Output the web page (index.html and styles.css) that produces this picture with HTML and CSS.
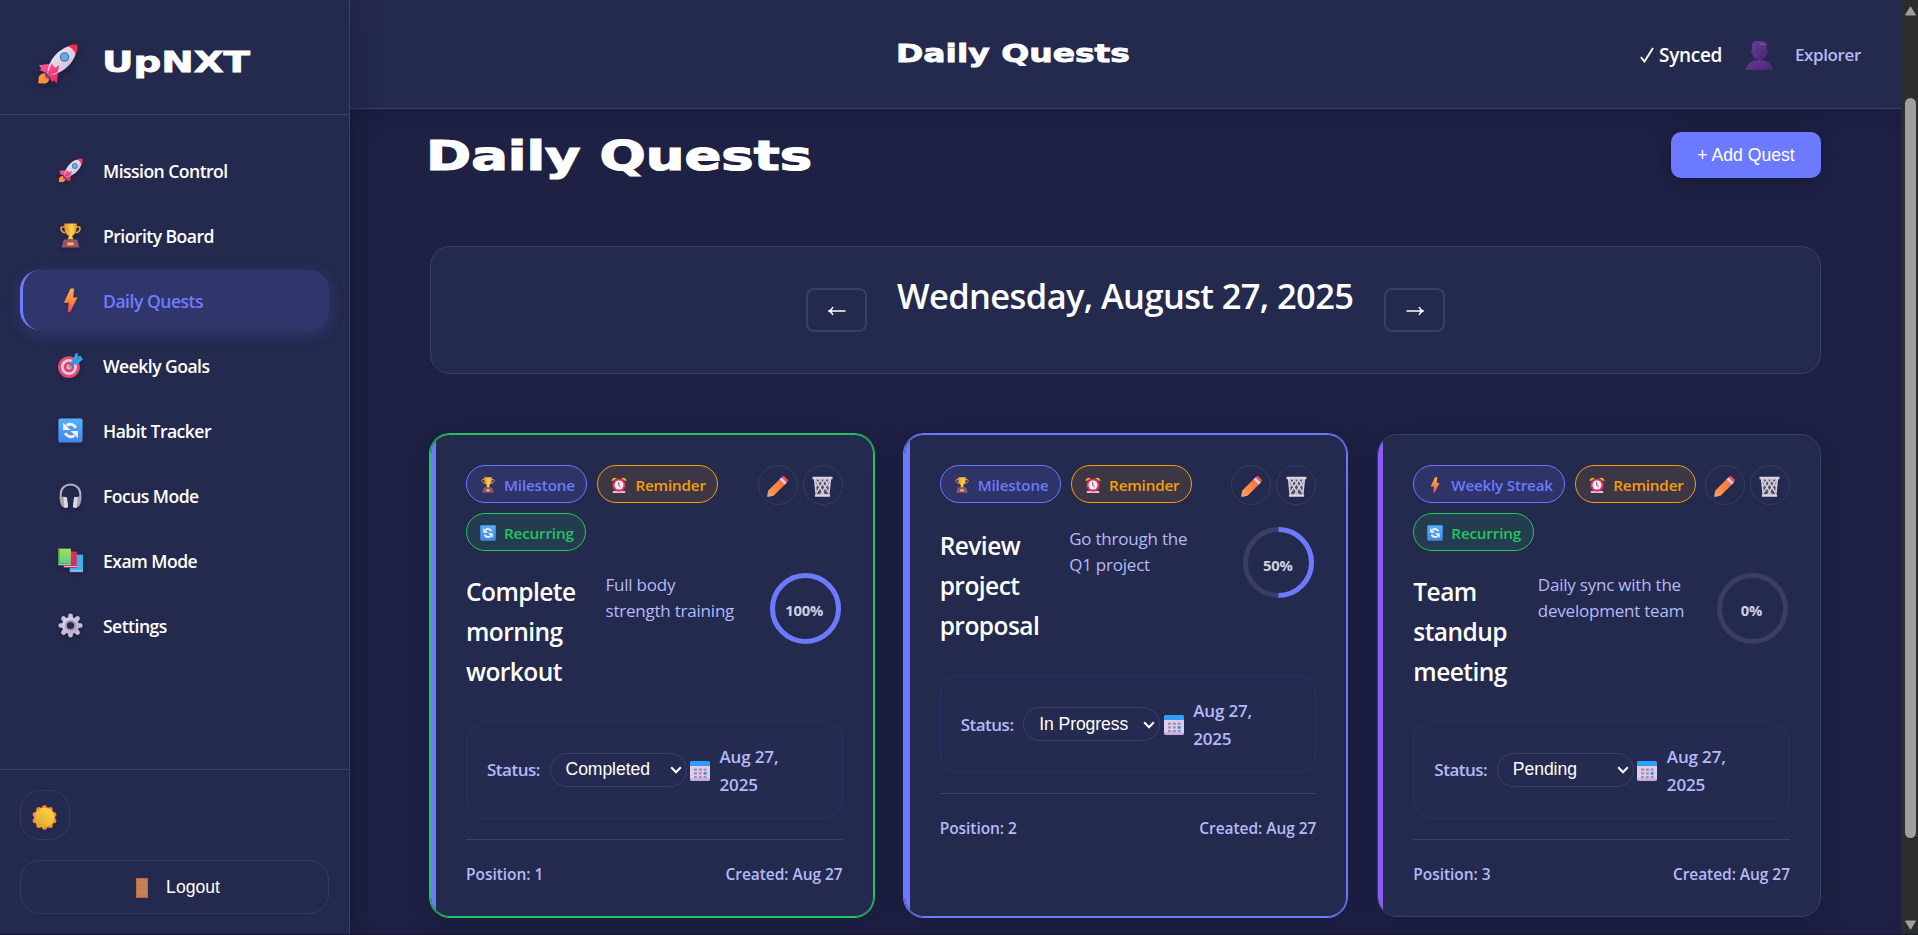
FILE: index.html
```html
<!DOCTYPE html>
<html lang="en">
<head>
<meta charset="utf-8">
<title>UpNXT - Daily Quests</title>
<link rel="stylesheet" href="styles.css">
</head>
<body>
<svg class="sprite" width="0" height="0" aria-hidden="true">
  <defs>
    <linearGradient id="gBody" x1="0" y1="0" x2="1" y2="1"><stop offset="0" stop-color="#f5eefa"/><stop offset="1" stop-color="#c9b6d6"/></linearGradient>
    <linearGradient id="gPink" x1="0" y1="0" x2="1" y2="1"><stop offset="0" stop-color="#ff5c93"/><stop offset="1" stop-color="#e8286a"/></linearGradient>
    <linearGradient id="gGold" x1="0" y1="0" x2="1" y2="0"><stop offset="0" stop-color="#e8872e"/><stop offset=".6" stop-color="#ffd24f"/><stop offset="1" stop-color="#e39a2f"/></linearGradient>
    <linearGradient id="gBolt" x1="0" y1="0" x2="0" y2="1"><stop offset="0" stop-color="#ffb340"/><stop offset=".55" stop-color="#ff8345"/><stop offset="1" stop-color="#ee4558"/></linearGradient>
    <linearGradient id="gBlue" x1="0" y1="0" x2="0" y2="1"><stop offset="0" stop-color="#55b0ff"/><stop offset="1" stop-color="#4285e8"/></linearGradient>
    <linearGradient id="gGrey" x1="0" y1="0" x2="1" y2="1"><stop offset="0" stop-color="#e6dcf0"/><stop offset="1" stop-color="#b3a2c4"/></linearGradient>
    <linearGradient id="gGreen" x1="0" y1="0" x2="0" y2="1"><stop offset="0" stop-color="#a5dd55"/><stop offset="1" stop-color="#5fcf8a"/></linearGradient>
    <linearGradient id="gSun" x1="1" y1="0" x2="0" y2="1"><stop offset="0" stop-color="#ffdb45"/><stop offset="1" stop-color="#dda22c"/></linearGradient>
    <linearGradient id="gMan" x1="0" y1="0" x2="1" y2="1"><stop offset="0" stop-color="#6a3c9a"/><stop offset="1" stop-color="#46246f"/></linearGradient>
    <linearGradient id="gPencil" x1="0" y1="1" x2="1" y2="0"><stop offset="0" stop-color="#ffa04a"/><stop offset="1" stop-color="#ff6a3a"/></linearGradient>
  </defs>
  <symbol id="rocket" viewBox="0 0 32 32">
    <path d="M7 23c-3-.6-6 1.500-5.800 4.500L1 31l1.200-.6 1 .7 1.300-.5 1.300.4C9 30.500 10 28 9.500 25z" fill="#ff9436"/>
    <path d="M10 15.500 1.500 16.500l2 3-1.500.8L8 23zM16.500 22l-1 8.500-2.700-2.300-1 1.800L9 24z" fill="url(#gPink)"/>
    <path d="M8 24C8 14 16 3 28 1l3 3C29.500 16 18 24 8.500 24.500z" fill="url(#gBody)"/>
    <path d="M24 1.800C27 .4 30 .2 31.500.8c.4 2 .1 4.700-1.300 7.500-1-3-3.200-5.500-6.200-6.500z" fill="#f5304f"/>
    <path d="M8 23.500 11.500 15l2.500 3.500 3.500-2-1.500 5.500-5 2-3.500 3.500-2-2z" fill="url(#gPink)"/>
    <path d="m7 22.500 3.500 4-1.500.7-3-3z" fill="#554a80"/>
    <circle cx="21.500" cy="10.200" r="3.700" fill="#5a7399"/><circle cx="21.500" cy="10.200" r="2.700" fill="#59aeff"/>
  </symbol>
  <symbol id="trophy" viewBox="0 0 32 32">
    <path d="M9 5H5C3 5 3 12 9.500 12.500M23 5h4c2 0 2 7-4.500 7.500" fill="none" stroke="#eaa03c" stroke-width="2"/>
    <path d="M8 .5h16C24.500 9 22.500 14 18.500 16v2l1.500 3h-8l1.500-3v-2C9.500 14 7.500 9 8 .5z" fill="url(#gGold)"/>
    <path d="M7.500 21h17l3 10.500h-23z" fill="#95546e"/><path d="M12 25h8v3.500h-8z" fill="#fbc33c"/>
  </symbol>
  <symbol id="bolt" viewBox="0 0 32 32"><path d="M16 .5h4.500L19.500 12H24c.6 0 .8.600.5 1.100L15.500 31h-3l1.300-12H8.500c-.7 0-.9-.6-.6-1.200z" fill="url(#gBolt)"/></symbol>
  <symbol id="target" viewBox="0 0 32 32">
    <circle cx="14" cy="18" r="14" fill="#e9466d"/><circle cx="14" cy="18" r="10.300" fill="#dccbe4"/><circle cx="14" cy="18" r="6.700" fill="#e53f6c"/><circle cx="14" cy="18" r="3.200" fill="#cdbad9"/>
    <path d="m14 18 9-9" stroke="#4b7fb5" stroke-width="1.500"/><path d="m16 12 4-5 2-6 3-1 .5 4.500 3-1L32 8l-6 5-6 3z" fill="#2fa5f2"/><path d="m18 14 9-9" stroke="#1672bd"/>
  </symbol>
  <symbol id="refresh" viewBox="0 0 32 32">
    <rect x=".5" y=".5" width="31" height="31" rx="2.500" fill="url(#gBlue)"/>
    <path d="M22.800 12.500A8 8 0 0 0 11 9.500M9.200 19.500a8 8 0 0 0 11.800 3" fill="none" stroke="#f5efff" stroke-width="3.600"/>
    <path d="M6.500 6v9.500H16zM25.500 26v-9.500H16z" fill="#f5efff"/>
  </symbol>
  <symbol id="headphones" viewBox="0 0 32 32">
    <path d="M3.500 20V14C3.500-2 28.500-2 28.500 14v6" fill="none" stroke="#b9b0bf" stroke-width="2.500"/>
    <path d="M2 17.500c1-1 3-.8 4 0l4.500.5 2.500 13-3.500 1C4 31 2 25 2 17.500zM30 17.500c-1-1-3-.8-4 0l-4.500.5-2.500 13 3.500 1c5.500-1 7.500-7 7.500-14.500z" fill="#aaa2ae"/>
    <path d="M7 18.500c2-1 3.500-.8 4.500 0L13 30.500c-1.500 1.500-3 1.500-5 1zM25 18.500c-2-1-3.500-.8-4.500 0L19 30.500c1.500 1.500 3 1.500 5 1z" fill="#ded7e2"/>
  </symbol>
  <symbol id="books" viewBox="0 0 32 32">
    <path d="M15 8.500h17V30H15z" fill="#35b4ee"/><path d="M15 28h17v3H15z" fill="#6d87de"/><path d="M16 28.700h16v1.200H16z" fill="#d8d6f4"/>
    <path d="M7 4.500h17V23H7z" fill="#e32a60"/><path d="M7 22.500h17v3H7z" fill="#b6285f"/><path d="M8 23.200h16v1.200H8z" fill="#e5d5ee"/>
    <path d="M0 .8h16.500v19H0z" fill="url(#gGreen)"/><path d="M0 .8h2v21H0z" fill="#46a43f"/><path d="M0 19.500h16.500v3H0z" fill="#4b8a5a"/><path d="M1 20.200h15.500v1.200H1z" fill="#d7e4e2"/>
  </symbol>
  <symbol id="gear" viewBox="0 0 32 32">
    <g stroke-width="6" stroke-linecap="round" stroke="#cbbdd8"><path d="M16 3.500V28.500M3.500 16H28.500"/><path d="m7 7 18 18M25 7 7 25"/></g>
    <circle cx="16" cy="16" r="11" fill="url(#gGrey)"/><circle cx="16" cy="16" r="7" fill="#a293b4"/><circle cx="16" cy="16" r="4.600" fill="#24294e"/>
  </symbol>
  <symbol id="sun" viewBox="0 0 32 32">
    <g fill="#f58a35"><circle cx="16" cy="16" r="13.500"/><circle cx="16" cy="3.500" r="3.200"/><circle cx="16" cy="28.500" r="3.200"/><circle cx="8.600" cy="5.900" r="3.200"/><circle cx="23.400" cy="5.900" r="3.200"/><circle cx="8.600" cy="26.100" r="3.200"/><circle cx="23.400" cy="26.100" r="3.200"/><circle cx="4" cy="12" r="3.200"/><circle cx="28" cy="12" r="3.200"/><circle cx="4" cy="20" r="3.200"/><circle cx="28" cy="20" r="3.200"/></g>
    <circle cx="16" cy="16" r="12.600" fill="url(#gSun)"/>
  </symbol>
  <symbol id="door" viewBox="0 0 12 20"><path d="M0 0h12v20H0z" fill="#b8693f"/><path d="M1.200 1.200h9.600v17.600H1.200z" fill="#ce8a66"/><path d="M2.500 2.500h7v5h-7zM2.500 10h7v3h-7zM2.500 15h7v3h-7z" fill="#c9815d" stroke="#b97350" stroke-width=".6"/><path d="M1 8.500h10" stroke="#dd7c41"/></symbol>
  <symbol id="person" viewBox="0 0 29 29"><path d="M7 4c.5-4 3-4 7.500-4S21.500.5 22 4v4.500c1.200 0 1.200 4-.3 3.800C21 17 18 19 14.500 19S8 17 7.300 12.300C5.800 12.500 5.800 8.500 7 8.500z" fill="url(#gMan)"/><path d="M.5 29C2 22 8 19 14.500 19S27 22 28.500 29z" fill="url(#gMan)"/><path d="M15 2.500h5.500V4H15z" fill="#7d52a8"/></symbol>
  <symbol id="alarm" viewBox="0 0 32 32">
    <path d="M1.500 9C0 3 7-1 11.500 3zM30.500 9c1.500-6-5.500-10-10-6z" fill="#f4a829"/><path d="M5 28h22c2 0 3 4 0 4H5c-3 0-2-4 0-4z" fill="#dfbfe0"/>
    <circle cx="16" cy="16.500" r="13" fill="#e8365f"/><circle cx="16" cy="16" r="9" fill="#f6ecfa"/><path d="M15.500 10v6.500l3.500 3" fill="none" stroke="#5b426e" stroke-width="2"/>
  </symbol>
  <symbol id="pencil" viewBox="0 0 32 32"><path d="M2 22 20 4l8 8-18 18-9.500 1.500z" fill="url(#gPencil)"/><path d="M1.500 23.500 8.500 30.500.5 31.500z" fill="#dda48c"/><path d="m19 5 3.500-3 8 8L27 13z" fill="#dacde8"/><path d="m22 2 2-1.500c1-.7 2-.5 3 .5l4 4c1 1 1.200 2 .5 3L30 10z" fill="#f4504b"/></symbol>
  <symbol id="trash" viewBox="0 0 32 32"><path d="M4 4h24l-2.500 25h-19z" fill="#575069"/><path d="m5 5 14 24M12 5l13 20M19 5l7 11M27 5 13 29M20 5 7 25M13 5 6 16" stroke="#d8cfe0" stroke-width="2.300"/><path d="M4 4h24l-2.500 25h-19z" fill="none" stroke="#d8cfe0" stroke-width="2.400"/><path d="M.8 1h30.400v4H.8zM4.500 28.500h23v3.300h-23z" fill="#dcd3e2"/></symbol>
  <symbol id="calendar" viewBox="0 0 20 20"><rect width="20" height="20" rx="2.500" fill="#ddcdea"/><path d="M0 5V2.500Q0 0 2.500 0h15Q20 0 20 2.500V5z" fill="#319dfb"/><path d="M0 17.500h20Q20 20 17.500 20h-15Q0 20 0 17.500z" fill="#c9a9dc"/><path d="M4 7.500h3v2.300H4zm4.800 0h3v2.300h-3zm4.800 0h3v2.300h-3zM4 11.300h3v2.300H4zm4.800 0h3v2.300h-3zM4 15.100h3v2.200H4zm4.800 0h3v2.200h-3zm4.800 0h3v2.200h-3z" fill="#9d90ae"/><path d="M13.600 11h3v2.800h-3z" fill="#2b95f3"/></symbol>
  <symbol id="chevron" viewBox="0 0 12 8"><path d="m1.200 1.300 4.800 5 4.800-5" fill="none" stroke="#fff" stroke-width="2"/></symbol>
  <symbol id="check" viewBox="0 0 14 16"><path d="m.8 10.200 3.700 4.300L13 1" fill="none" stroke="#fff" stroke-width="1.900"/></symbol>
</svg>

<div class="app">
  <aside class="sidebar">
    <div class="brand">
      <svg class="brand-icon"><use href="#rocket"/></svg>
      <svg class="brand-name" viewBox="0 0 147 30"><text x="-1" y="25" textLength="148" lengthAdjust="spacingAndGlyphs">UpNXT</text></svg>
    </div>
    <nav class="nav">
      <a class="nav-item"><svg class="nav-icon"><use href="#rocket"/></svg><span>Mission Control</span></a>
      <a class="nav-item"><svg class="nav-icon"><use href="#trophy"/></svg><span>Priority Board</span></a>
      <a class="nav-item active"><svg class="nav-icon"><use href="#bolt"/></svg><span>Daily Quests</span></a>
      <a class="nav-item"><svg class="nav-icon"><use href="#target"/></svg><span>Weekly Goals</span></a>
      <a class="nav-item"><svg class="nav-icon"><use href="#refresh"/></svg><span>Habit Tracker</span></a>
      <a class="nav-item"><svg class="nav-icon"><use href="#headphones"/></svg><span>Focus Mode</span></a>
      <a class="nav-item"><svg class="nav-icon"><use href="#books"/></svg><span>Exam Mode</span></a>
      <a class="nav-item"><svg class="nav-icon"><use href="#gear"/></svg><span>Settings</span></a>
    </nav>
    <div class="side-footer">
      <div class="theme-btn"><svg><use href="#sun"/></svg></div>
      <div class="logout"><svg><use href="#door"/></svg><span>Logout</span></div>
    </div>
  </aside>

  <div class="main">
    <header class="topbar">
      <svg class="top-title" viewBox="0 0 236 30"><text x="-1" y="22" textLength="234" lengthAdjust="spacingAndGlyphs">Daily Quests</text></svg>
      <div class="user">
        <svg class="check"><use href="#check"/></svg>
        <span class="synced">Synced</span>
        <svg class="person"><use href="#person"/></svg>
        <span class="explorer">Explorer</span>
      </div>
    </header>
    <main class="content">
      <div class="page-head">
        <svg class="page-title" viewBox="0 0 386 46"><text x="-2" y="34" textLength="386" lengthAdjust="spacingAndGlyphs">Daily Quests</text></svg>
        <div class="add-btn">+ Add Quest</div>
      </div>
      <div class="date-bar">
        <div class="arrow"><svg viewBox="0 0 18 10"><path d="M17.500 5H1M5 1C4 3.200 3 4.300 1 5c2 .7 3 1.800 4 4" /></svg></div>
        <div class="date-text">Wednesday, August 27, 2025</div>
        <div class="arrow"><svg viewBox="0 0 18 10"><path d="M.5 5H17M13 1c1 2.200 2 3.300 4 4-2 .7-3 1.800-4 4" /></svg></div>
      </div>

      <div class="cards">
        <article class="card done">
          <div class="card-head">
            <div class="badges">
              <div class="badge blue"><svg><use href="#trophy"/></svg><span>Milestone</span></div>
              <div class="badge orange"><svg><use href="#alarm"/></svg><span>Reminder</span></div>
              <div class="badge green"><svg><use href="#refresh"/></svg><span>Recurring</span></div>
            </div>
            <div class="actions"><div class="act"><svg><use href="#pencil"/></svg></div><div class="act"><svg><use href="#trash"/></svg></div></div>
          </div>
          <div class="card-body">
            <h3 class="title t1">Complete<br>morning<br>workout</h3>
            <p class="desc">Full body<br>strength training</p>
            <div class="ring"><svg viewBox="0 0 75 75"><circle cx="37.500" cy="37.500" r="33"/><circle class="val" cx="37.500" cy="37.500" r="33"/></svg><span>100%</span></div>
          </div>
          <div class="meta">
            <span class="status">Status:</span>
            <div class="select"><span>Completed</span><svg><use href="#chevron"/></svg></div>
            <svg class="cal"><use href="#calendar"/></svg>
            <span class="due">Aug 27,<br>2025</span>
          </div>
          <div class="card-foot"><span>Position: 1</span><span>Created: Aug 27</span></div>
        </article>

        <article class="card progress">
          <div class="card-head">
            <div class="badges">
              <div class="badge blue"><svg><use href="#trophy"/></svg><span>Milestone</span></div>
              <div class="badge orange"><svg><use href="#alarm"/></svg><span>Reminder</span></div>
            </div>
            <div class="actions"><div class="act"><svg><use href="#pencil"/></svg></div><div class="act"><svg><use href="#trash"/></svg></div></div>
          </div>
          <div class="card-body">
            <h3 class="title t2">Review<br>project<br>proposal</h3>
            <p class="desc">Go through the<br>Q1 project</p>
            <div class="ring"><svg viewBox="0 0 75 75"><circle cx="37.500" cy="37.500" r="33"/><path class="val" d="M37.500 4.500a33 33 0 0 1 0 66"/></svg><span>50%</span></div>
          </div>
          <div class="meta">
            <span class="status">Status:</span>
            <div class="select"><span>In Progress</span><svg><use href="#chevron"/></svg></div>
            <svg class="cal"><use href="#calendar"/></svg>
            <span class="due">Aug 27,<br>2025</span>
          </div>
          <div class="card-foot"><span>Position: 2</span><span>Created: Aug 27</span></div>
        </article>

        <article class="card pending">
          <div class="card-head">
            <div class="badges">
              <div class="badge blue"><svg><use href="#bolt"/></svg><span>Weekly Streak</span></div>
              <div class="badge orange"><svg><use href="#alarm"/></svg><span>Reminder</span></div>
              <div class="badge green"><svg><use href="#refresh"/></svg><span>Recurring</span></div>
            </div>
            <div class="actions"><div class="act"><svg><use href="#pencil"/></svg></div><div class="act"><svg><use href="#trash"/></svg></div></div>
          </div>
          <div class="card-body">
            <h3 class="title t3">Team<br>standup<br>meeting</h3>
            <p class="desc">Daily sync with the<br>development team</p>
            <div class="ring"><svg viewBox="0 0 75 75"><circle cx="37.500" cy="37.500" r="33"/></svg><span>0%</span></div>
          </div>
          <div class="meta">
            <span class="status">Status:</span>
            <div class="select"><span>Pending</span><svg><use href="#chevron"/></svg></div>
            <svg class="cal"><use href="#calendar"/></svg>
            <span class="due">Aug 27,<br>2025</span>
          </div>
          <div class="card-foot"><span>Position: 3</span><span>Created: Aug 27</span></div>
        </article>
      </div>
    </main>
  </div>

  <div class="scrollbar">
    <svg viewBox="0 0 12 10"><path d="M6 .8 11 9H1z"/></svg>
    <div class="thumb"></div>
    <svg viewBox="0 0 12 10"><path d="M6 9.200 11 1H1z"/></svg>
  </div>
</div>
</body>
</html>
```
FILE: styles.css
```css
* { box-sizing: border-box; margin: 0; padding: 0; }
body { background: #1e2144; color: #fff; font-family: "Open Sans", "Noto Sans", sans-serif; overflow: hidden; }
svg { display: block; flex: none; }
.sprite { position: absolute; }
.app { display: flex; width: 1918px; height: 935px; border-bottom: 1px solid #191b30; }

/* Sidebar */
.sidebar { width: 350px; flex: none; display: flex; flex-direction: column; background: #24294e; border-right: 1px solid #3a3f64; box-shadow: 4px 0 24px rgba(10, 12, 35, .25); z-index: 1; }
.brand { height: 115px; display: flex; align-items: center; padding: 14px 0 0 37px; border-bottom: 1px solid #3a3f64; }
.brand-icon { width: 41px; height: 41px; margin-right: 25px; filter: drop-shadow(0 3px 4px rgba(0, 0, 0, .25)); }
.brand-name { width: 147px; height: 30px; margin-top: -4px; overflow: visible; }
.brand-name text { font: 800 28px "DejaVu Sans", sans-serif; fill: #fff; stroke: #fff; stroke-width: .8; }
.nav { padding: 25px 20px 0 20px; display: flex; flex-direction: column; gap: 5px; flex: 1; }
.nav-item { height: 60px; display: flex; align-items: center; gap: 20px; padding-left: 35px; border-left: 3px solid transparent; border-radius: 20px; font-size: 17.600px; font-weight: 600; letter-spacing: -.55px; }
.nav-item span { margin-top: 1px; }
.nav-icon { width: 25px; height: 25px; margin-top: 1px; filter: drop-shadow(0 2px 2px rgba(0, 0, 0, .2)); }
.nav-item.active { background: #30366b; color: #6e7cff; border-left-color: #6e7cff; letter-spacing: -.5px; box-shadow: 0 4px 15px rgba(108, 122, 255, .2); }
.side-footer { border-top: 1px solid #3a3f64; height: 165px; padding: 20px; display: flex; flex-direction: column; gap: 20px; }
.theme-btn { width: 50px; height: 50px; border: 1px solid #343a60; border-radius: 20px; display: grid; place-items: center; padding: 5px 1px 0 0; }
.theme-btn svg { width: 25px; height: 25px; }
.logout { height: 55px; border: 1px solid #343a60; border-radius: 20px; display: flex; align-items: center; justify-content: center; gap: 18px; padding-left: 7px; font: 17.600px "Liberation Sans", sans-serif; }
.logout svg { width: 12px; height: 20px; margin-top: 3px; }
.logout span { margin-top: 1px; }

/* Main area */
.main { width: 1551px; flex: none; display: flex; flex-direction: column; }
.topbar { height: 109px; flex: none; background: #24294e; border-bottom: 1px solid #3a3f64; display: flex; padding: 40px 41px 0 547px; justify-content: space-between; }
.top-title { width: 236px; height: 30px; overflow: visible; }
.top-title text { font: 800 24.200px "DejaVu Sans", sans-serif; fill: #fff; stroke: #fff; stroke-width: .8; }
.user { display: flex; height: 30px; align-items: center; font-weight: 600; }
.check { width: 14px; height: 16px; margin-right: 5px; }
.synced { width: 65px; font-size: 19px; letter-spacing: -.3px; }
.person { width: 29px; height: 29px; margin: 0 21px 0 21px; }
.explorer { width: 65px; font-size: 17px; letter-spacing: -.4px; margin-top: -2px; color: #b4baf8; }
.content { flex: 1; padding: 23px 80px 0 80px; box-shadow: inset 0 10px 20px rgba(10, 12, 35, .12); }
.page-head { display: flex; justify-content: space-between; }
.page-title { width: 386px; height: 46px; margin: 4px 0 0 -2px; overflow: visible; }
.page-title text { font: 800 40px "DejaVu Sans", sans-serif; fill: #fff; stroke: #fff; stroke-width: 1.200; }
.add-btn { width: 150px; height: 46px; border-radius: 10px; background: #6c7aff; font: 17.600px/46px "Liberation Sans", sans-serif; text-align: center; box-shadow: 0 4px 20px rgba(10, 12, 35, .35); }
.date-bar { height: 128px; margin-top: 64px; border: 1px solid #3a3f64; border-radius: 20px; background: #24294e; display: flex; justify-content: center; gap: 30px; padding-top: 21px; }
.arrow { width: 61px; height: 44px; margin-top: 20px; border: 2px solid #3a3f64; border-radius: 8px; display: grid; place-items: center; }
.arrow svg { width: 18px; height: 10px; margin-top: 2px; }
.arrow path { fill: none; stroke: #fff; stroke-width: 1.500; }
.date-text { width: 457px; font-size: 34.500px; line-height: 56px; font-weight: 600; letter-spacing: -.630px; white-space: nowrap; }

/* Quest cards */
.cards { display: grid; grid-template-columns: repeat(3, 1fr); gap: 30px; margin-top: 60px; }
.card { position: relative; height: 483px; border: 1px solid #3a3f64; border-radius: 20px; background: linear-gradient(90deg, #8b5cf6 5px, #24294e 5px) padding-box; padding: 30px 30px 0 35px; box-shadow: 0 8px 32px rgba(10, 12, 35, .3); }
.card.done { border-color: #22c55e; background: linear-gradient(90deg, #6c7aff 5px, #24294e 5px) padding-box; box-shadow: 0 0 0 1px #22c55e, 0 8px 32px rgba(10, 12, 35, .3); }
.card.progress { border-color: #6c7aff; background: linear-gradient(90deg, #6c7aff 5px, #24294e 5px) padding-box; box-shadow: 0 0 0 1px #6c7aff, 0 8px 32px rgba(10, 12, 35, .3); }
.card-head { display: flex; justify-content: space-between; min-height: 40px; margin-bottom: 20px; }
.badges { display: flex; flex-wrap: wrap; gap: 10px; width: 286px; }
.badge { height: 37.800px; display: flex; align-items: center; gap: 8px; padding: 0 11.500px 0 13px; border: 1px solid; border-radius: 20px; font-size: 15.200px; font-weight: 600; letter-spacing: -.15px; white-space: nowrap; }
.badge svg { width: 16px; height: 16px; margin-top: 2px; }
.badge span { margin-top: 2px; }
.badge.blue { color: #6c7aff; background: rgba(108, 122, 255, .15); }
.badge.orange { color: #f59e0b; background: rgba(245, 158, 11, .12); }
.badge.green { color: #22c55e; background: rgba(34, 197, 94, .12); }
.pending .badge.blue { letter-spacing: -.2px; }
.actions { display: flex; gap: 5px; flex: none; }
.act { width: 40px; height: 40px; border: 1px solid #353a60; border-radius: 50%; display: grid; place-items: center; padding-top: 3px; }
.act svg { width: 21px; height: 21px; }
.card-body { display: flex; height: 130px; margin-bottom: 20px; }
.title { flex: none; font-size: 24.500px; line-height: 40px; font-weight: 600; letter-spacing: -.55px; margin-top: 1px; }
.t1 { width: 139.500px; }
.t2 { width: 129.500px; }
.t3 { width: 124.500px; }
.desc { flex: 1; font-size: 17px; line-height: 26.400px; letter-spacing: -.22px; color: #b4baf8; white-space: nowrap; margin-top: 1px; }
.ring { width: 75px; height: 75px; display: grid; place-items: center; flex: none; }
.ring > * { grid-area: 1 / 1; }
.ring svg { width: 75px; height: 75px; }
.ring circle, .ring path { fill: none; stroke: #3a3e64; stroke-width: 5; }
.ring .val { stroke: #6c7aff; }
.ring span { font-size: 14.800px; font-weight: 700; letter-spacing: -.2px; color: #cfd1e0; margin: 4px 2px 0 0; }
.meta { height: 98px; border: 1px solid #2c3163; border-radius: 20px; background: #252a50; display: flex; align-items: center; padding-left: 20px; color: #b4baf8; font-size: 17px; font-weight: 600; letter-spacing: -.4px; }
.status { width: 62.500px; letter-spacing: -.5px; }
.select { width: 137px; height: 34px; border: 1px solid #3a3f64; border-radius: 17px; display: flex; align-items: center; justify-content: space-between; padding: 0 4px 0 15px; color: #fff; font: 17.600px "Liberation Sans", sans-serif; letter-spacing: -.08px; }
.select svg { width: 12px; height: 8px; margin-top: 1px; }
.cal { width: 20px; height: 20px; margin: 2px 9.500px 0 3.500px; }
.due { line-height: 27.700px; margin-top: 2px; letter-spacing: -.15px; }
.card-foot { border-top: 1px solid #3a3f64; margin-top: 20px; padding-top: 22px; display: flex; justify-content: space-between; font-size: 15.500px; font-weight: 600; line-height: 24px; letter-spacing: -.05px; color: #b4baf8; }

/* Window scrollbar */
.scrollbar { width: 17px; background: #2c2c2c; display: flex; flex-direction: column; align-items: center; padding: 6px 0 4px 2px; }
.scrollbar svg { width: 13px; height: 10px; }
.scrollbar path { fill: #9f9f9f; stroke: #9f9f9f; stroke-linejoin: round; }
.thumb { width: 11px; height: 740px; margin: 82px 0 auto; border-radius: 6px; background: #9f9f9f; }
```
